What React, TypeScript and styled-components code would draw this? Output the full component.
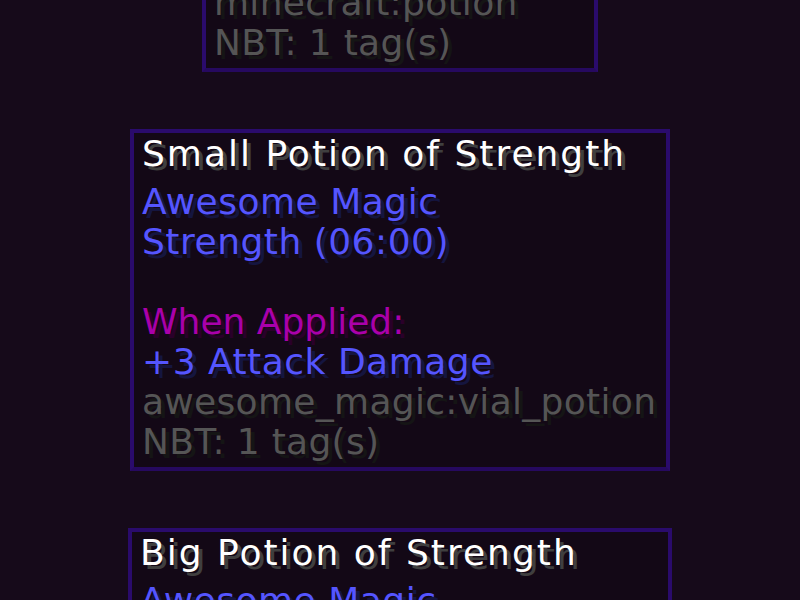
import React from "react";
import styled, { createGlobalStyle } from "styled-components";

type Tone = "title" | "blue" | "magenta" | "gray";

const tones: Record<Tone, { color: string; shadow: string; spacing: number }> = {
  title: { color: "#ffffff", shadow: "#3f3f3f", spacing: 2 },
  blue: { color: "#5555ff", shadow: "#15153f", spacing: 0.5 },
  magenta: { color: "#aa00aa", shadow: "#2a002a", spacing: 0 },
  gray: { color: "#555555", shadow: "#151515", spacing: 0.3 },
};

type Item = {
  width: number;
  lines: [Tone, string][];
};

const items: Item[] = [
  {
    width: 396,
    lines: [
      ["title", "Potion of Strength"],
      ["blue", "Strength (03:00)"],
      ["blue", ""],
      ["magenta", "When Applied:"],
      ["blue", "+3 Attack Damage"],
      ["gray", "minecraft:potion"],
      ["gray", "NBT: 1 tag(s)"],
    ],
  },
  {
    width: 540,
    lines: [
      ["title", "Small Potion of Strength"],
      ["blue", "Awesome Magic"],
      ["blue", "Strength (06:00)"],
      ["blue", ""],
      ["magenta", "When Applied:"],
      ["blue", "+3 Attack Damage"],
      ["gray", "awesome_magic:vial_potion"],
      ["gray", "NBT: 1 tag(s)"],
    ],
  },
  {
    width: 544,
    lines: [
      ["title", "Big Potion of Strength"],
      ["blue", "Awesome Magic"],
      ["blue", "Strength (12:00)"],
      ["blue", ""],
      ["magenta", "When Applied:"],
      ["blue", "+3 Attack Damage"],
      ["gray", "awesome_magic:big_potion"],
      ["gray", "NBT: 1 tag(s)"],
    ],
  },
];

const App = () => {
  return (
    <>
      <GlobalStyle />
      <Screen>
        <Stack>
          {items.map((item, i) => (
            <Tooltip key={i} $width={item.width}>
              {item.lines.map(([tone, text], j) => (
                <Line key={j} $tone={tone} $first={j === 0}>
                  {text}
                </Line>
              ))}
            </Tooltip>
          ))}
        </Stack>
      </Screen>
    </>
  );
};

export default App;

const GlobalStyle = createGlobalStyle`
  html, body {
    margin: 0;
    padding: 0;
    background: #160a1a;
    overflow: hidden;
  }
`;

const Screen = styled.div`
  width: 800px;
  height: 600px;
  overflow: hidden;
  background: #160a1a;
`;

const Stack = styled.div`
  display: flex;
  flex-direction: column;
  align-items: center;
  gap: 57px;
  margin-top: -230px;
`;

const Tooltip = styled.div<{ $width: number }>`
  box-sizing: border-box;
  width: ${(p) => p.$width}px;
  padding: 1px 8px 5px 8px;
  background: #130816;
  border: 4px solid #2a0b6c;
  border-bottom-color: #26095f;
  display: flex;
  flex-direction: column;
`;

const Line = styled.div<{ $tone: Tone; $first: boolean }>`
  height: 40px;
  line-height: 40px;
  margin-bottom: ${(p) => (p.$first ? 8 : 0)}px;
  white-space: nowrap;
  font-family: "DejaVu Sans", "Liberation Sans", sans-serif;
  font-size: 36px;
  letter-spacing: ${(p) => tones[p.$tone].spacing}px;
  color: ${(p) => tones[p.$tone].color};
  text-shadow: 4px 4px 0 ${(p) => tones[p.$tone].shadow};
`;
